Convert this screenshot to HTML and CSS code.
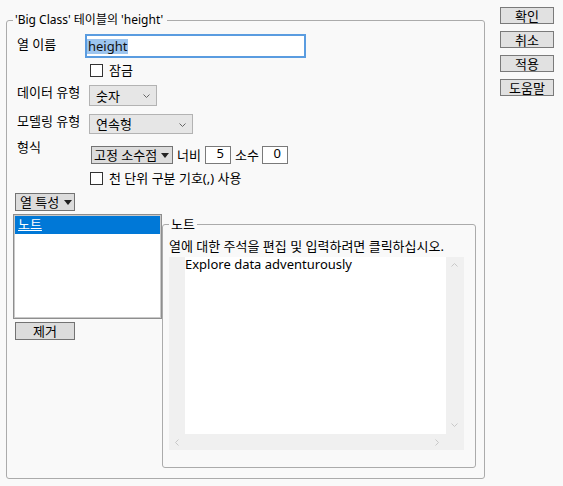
FILE: index.html
```html
<!DOCTYPE html>
<html lang="ko">
<head>
  <meta charset="UTF-8">
  <meta name="viewport" content="width=device-width, initial-scale=1.0">
  <title>열 정보</title>
  <link rel="stylesheet" href="styles.css">
</head>
<body>
  <div class="dialog">
    <fieldset class="group">
      <legend class="group-title">'Big Class' 테이블의 'height'</legend>

      <!-- column name -->
      <div class="row row-name">
        <span class="label">열 이름</span>
        <div class="name-input"><span class="selected">height</span></div>
      </div>
      <div class="row row-check row-lock">
        <span class="checkbox"></span><span>잠금</span>
      </div>

      <!-- types -->
      <div class="row row-dtype">
        <span class="label">데이터 유형</span>
        <div class="combo combo-dtype">
          <span>숫자</span>
          <svg width="7" height="4" viewBox="0 0 7 4"><polyline points="0.5,0.5 3.5,3.5 6.5,0.5" fill="none" stroke="#666" stroke-width="1"/></svg>
        </div>
      </div>
      <div class="row row-mtype">
        <span class="label">모델링 유형</span>
        <div class="combo combo-mtype">
          <span>연속형</span>
          <svg width="7" height="4" viewBox="0 0 7 4"><polyline points="0.5,0.5 3.5,3.5 6.5,0.5" fill="none" stroke="#666" stroke-width="1"/></svg>
        </div>
      </div>

      <!-- format -->
      <div class="row row-format">
        <span class="label label-format">형식</span>
        <div class="format">
          <div class="menu-btn format-btn">
            <span>고정 소수점</span>
            <svg width="8" height="5" viewBox="0 0 8 5"><polygon points="0,0 8,0 4,5" fill="#222"/></svg>
          </div>
          <span class="field-label">너비</span>
          <div class="num-input num-width">5</div>
          <span class="field-label">소수</span>
          <div class="num-input num-dec">0</div>
        </div>
      </div>
      <div class="row row-check row-thousands">
        <span class="checkbox"></span><span>천 단위 구분 기호(,) 사용</span>
      </div>

      <div class="menu-btn props-btn">
        <span>열 특성</span>
        <svg width="8" height="5" viewBox="0 0 8 5"><polygon points="0,0 8,0 4,5" fill="#222"/></svg>
      </div>

      <!-- properties -->
      <div class="lower">
        <div class="props">
          <div class="prop-list">
            <div class="prop-item selected-item"><span>노트</span></div>
          </div>
          <button class="btn remove-btn">제거</button>
        </div>

        <fieldset class="note">
          <legend>노트</legend>
          <div class="note-desc">열에 대한 주석을 편집 및 입력하려면 클릭하십시오.</div>
          <div class="note-area">
            <div class="note-text">Explore data adventurously</div>
            <div class="vscroll">
              <svg width="7" height="4" viewBox="0 0 7 4"><polyline points="0.5,3.5 3.5,0.5 6.5,3.5" fill="none" stroke="#c8c8c8" stroke-width="1"/></svg>
              <svg width="7" height="4" viewBox="0 0 7 4"><polyline points="0.5,0.5 3.5,3.5 6.5,0.5" fill="none" stroke="#c8c8c8" stroke-width="1"/></svg>
            </div>
            <div class="hscroll">
              <svg width="4" height="7" viewBox="0 0 4 7"><polyline points="3.5,0.5 0.5,3.5 3.5,6.5" fill="none" stroke="#c8c8c8" stroke-width="1"/></svg>
              <svg width="4" height="7" viewBox="0 0 4 7"><polyline points="0.5,0.5 3.5,3.5 0.5,6.5" fill="none" stroke="#c8c8c8" stroke-width="1"/></svg>
            </div>
          </div>
        </fieldset>
      </div>
    </fieldset>

    <div class="actions">
      <button class="btn">확인</button>
      <button class="btn">취소</button>
      <button class="btn">적용</button>
      <button class="btn">도움말</button>
    </div>
  </div>
</body>
</html>
```

FILE: styles.css
```css
/* Column info dialog */
body {
  margin: 0;
  background-color: #f9f9f9;
  color: #000;
  font-family: "Noto Sans", "Noto Sans CJK KR", sans-serif;
  font-size: 13px;
  line-height: 16px;
}

.dialog {
  display: flex;
  align-items: flex-start;
  padding: 6px 0 0 6px;
}

fieldset {
  margin: 0;
  min-width: 0;
  border: 1px solid #ababab;
  border-radius: 3px;
  box-sizing: border-box;
}

legend {
  padding: 0 4px 0 2px;
  line-height: 16px;
}

.group {
  width: 479px;
  height: 467px;
  margin-top: 6px;
  padding: 0 7px 0 6px;
}

.group-title {
  font-size: 12px;
}

.row {
  display: flex;
  align-items: flex-start;
}

.label {
  box-sizing: border-box;
  width: 72px;
  padding-left: 4px;
  flex-shrink: 0;
  white-space: nowrap;
}

/* column name */
.row-name {
  margin-top: 6px;
}

.row-name .label {
  margin-top: 2px;
}

.name-input {
  box-sizing: border-box;
  width: 221px;
  height: 24px;
  border: 2px solid #5a9ce0;
  background-color: #fff;
  padding: 2px 0 0 0;
}

.selected {
  display: inline-block;
  background-color: #9dc5ef;
  color: #111;
  line-height: 15px;
  padding: 0 1px;
}

.row-check {
  height: 16px;
  align-items: center;
  padding-left: 77px;
  white-space: nowrap;
}

.checkbox {
  box-sizing: border-box;
  width: 13px;
  height: 13px;
  border: 1px solid #333;
  background-color: #fff;
  margin-right: 6px;
  flex-shrink: 0;
}

.row-lock {
  margin-top: 4px;
}

/* combos */
.combo {
  box-sizing: border-box;
  display: flex;
  align-items: center;
  justify-content: space-between;
  margin-left: 4px;
  padding: 0 6px 0 6px;
  background-color: #e6e6e6;
  border: 1px solid #b3b3b3;
}

.combo svg {
  margin-top: 1px;
}

.row-dtype {
  margin-top: 7px;
}

.row-dtype .label,
.row-mtype .label {
  margin-top: -1px;
}

.combo-dtype {
  width: 68px;
  height: 21px;
}

.row-mtype {
  margin-top: 8px;
}

.combo-mtype {
  width: 104px;
  height: 20px;
}

/* format */
.row-format {
  margin-top: 12px;
}

.label-format {
  margin-top: -7px;
}

.format {
  display: flex;
  align-items: center;
  margin-left: 6px;
  white-space: nowrap;
}

.menu-btn {
  box-sizing: border-box;
  display: flex;
  align-items: center;
  justify-content: space-between;
  height: 18px;
  padding: 0 3px 0 2px;
  background-color: #dcdcdc;
  border: 1px solid #737373;
  white-space: nowrap;
}

.format-btn {
  width: 82px;
}

.field-label {
  margin-left: 4px;
}

.num-input {
  box-sizing: border-box;
  width: 26px;
  height: 18px;
  border: 1px solid #7a7a7a;
  background-color: #fff;
  text-align: right;
  padding-right: 6px;
  line-height: 13px;
}

.num-width {
  margin-left: 4px;
}

.num-dec {
  margin-left: 3px;
}

.row-thousands {
  margin-top: 6px;
}

.props-btn {
  width: 60px;
  margin: 7px 0 0 2px;
  padding: 0 2px 0 4px;
}

/* properties list and note */
.lower {
  display: flex;
  align-items: flex-start;
  margin-top: 3px;
}

.props {
  width: 149px;
  flex-shrink: 0;
}

.prop-list {
  box-sizing: border-box;
  height: 105px;
  border: 1px solid #8e8e8e;
  box-shadow: inset 0 0 0 1px #c9c9c9;
  background-color: #fff;
  padding: 1px;
}

.prop-item {
  height: 18px;
  padding-left: 3px;
}

.selected-item {
  background-color: #0078d7;
  color: #fff;
}

.selected-item span {
  text-decoration: underline;
}

.btn {
  box-sizing: border-box;
  display: block;
  font-family: inherit;
  font-size: 13px;
  line-height: 14px;
  padding: 0;
  color: #000;
  background-color: #e1e1e1;
  border: 1px solid #7a7a7a;
  border-radius: 0;
}

.remove-btn {
  width: 60px;
  height: 18px;
  margin: 3px 0 0 2px;
  background-color: #dcdcdc;
  border-color: #737373;
}

.note {
  width: 314px;
  height: 252px;
  margin-top: 2px;
  padding: 0 11px 0 6px;
}

.note legend {
  padding: 0 2px;
}

.note-desc {
  margin-top: 6px;
  white-space: nowrap;
}

.note-area {
  display: grid;
  grid-template-columns: 16px 261px 17px;
  grid-template-rows: 177px 16px;
  margin-top: 3px;
  background-color: #f0f0f0;
}

.note-text {
  grid-column: 2;
  grid-row: 1;
  background-color: #fff;
  line-height: 15px;
}

.vscroll {
  grid-column: 3;
  grid-row: 1;
  display: flex;
  flex-direction: column;
  align-items: center;
  justify-content: space-between;
  padding: 6px 0 7px 0;
}

.hscroll {
  grid-column: 1 / 3;
  grid-row: 2;
  display: flex;
  align-items: center;
  justify-content: space-between;
  padding: 0 7px 0 6px;
}

/* right-hand buttons */
.actions {
  margin-left: 15px;
  padding-top: 1px;
  display: flex;
  flex-direction: column;
  gap: 7px;
}

.actions .btn {
  width: 54px;
  height: 17px;
}
```
